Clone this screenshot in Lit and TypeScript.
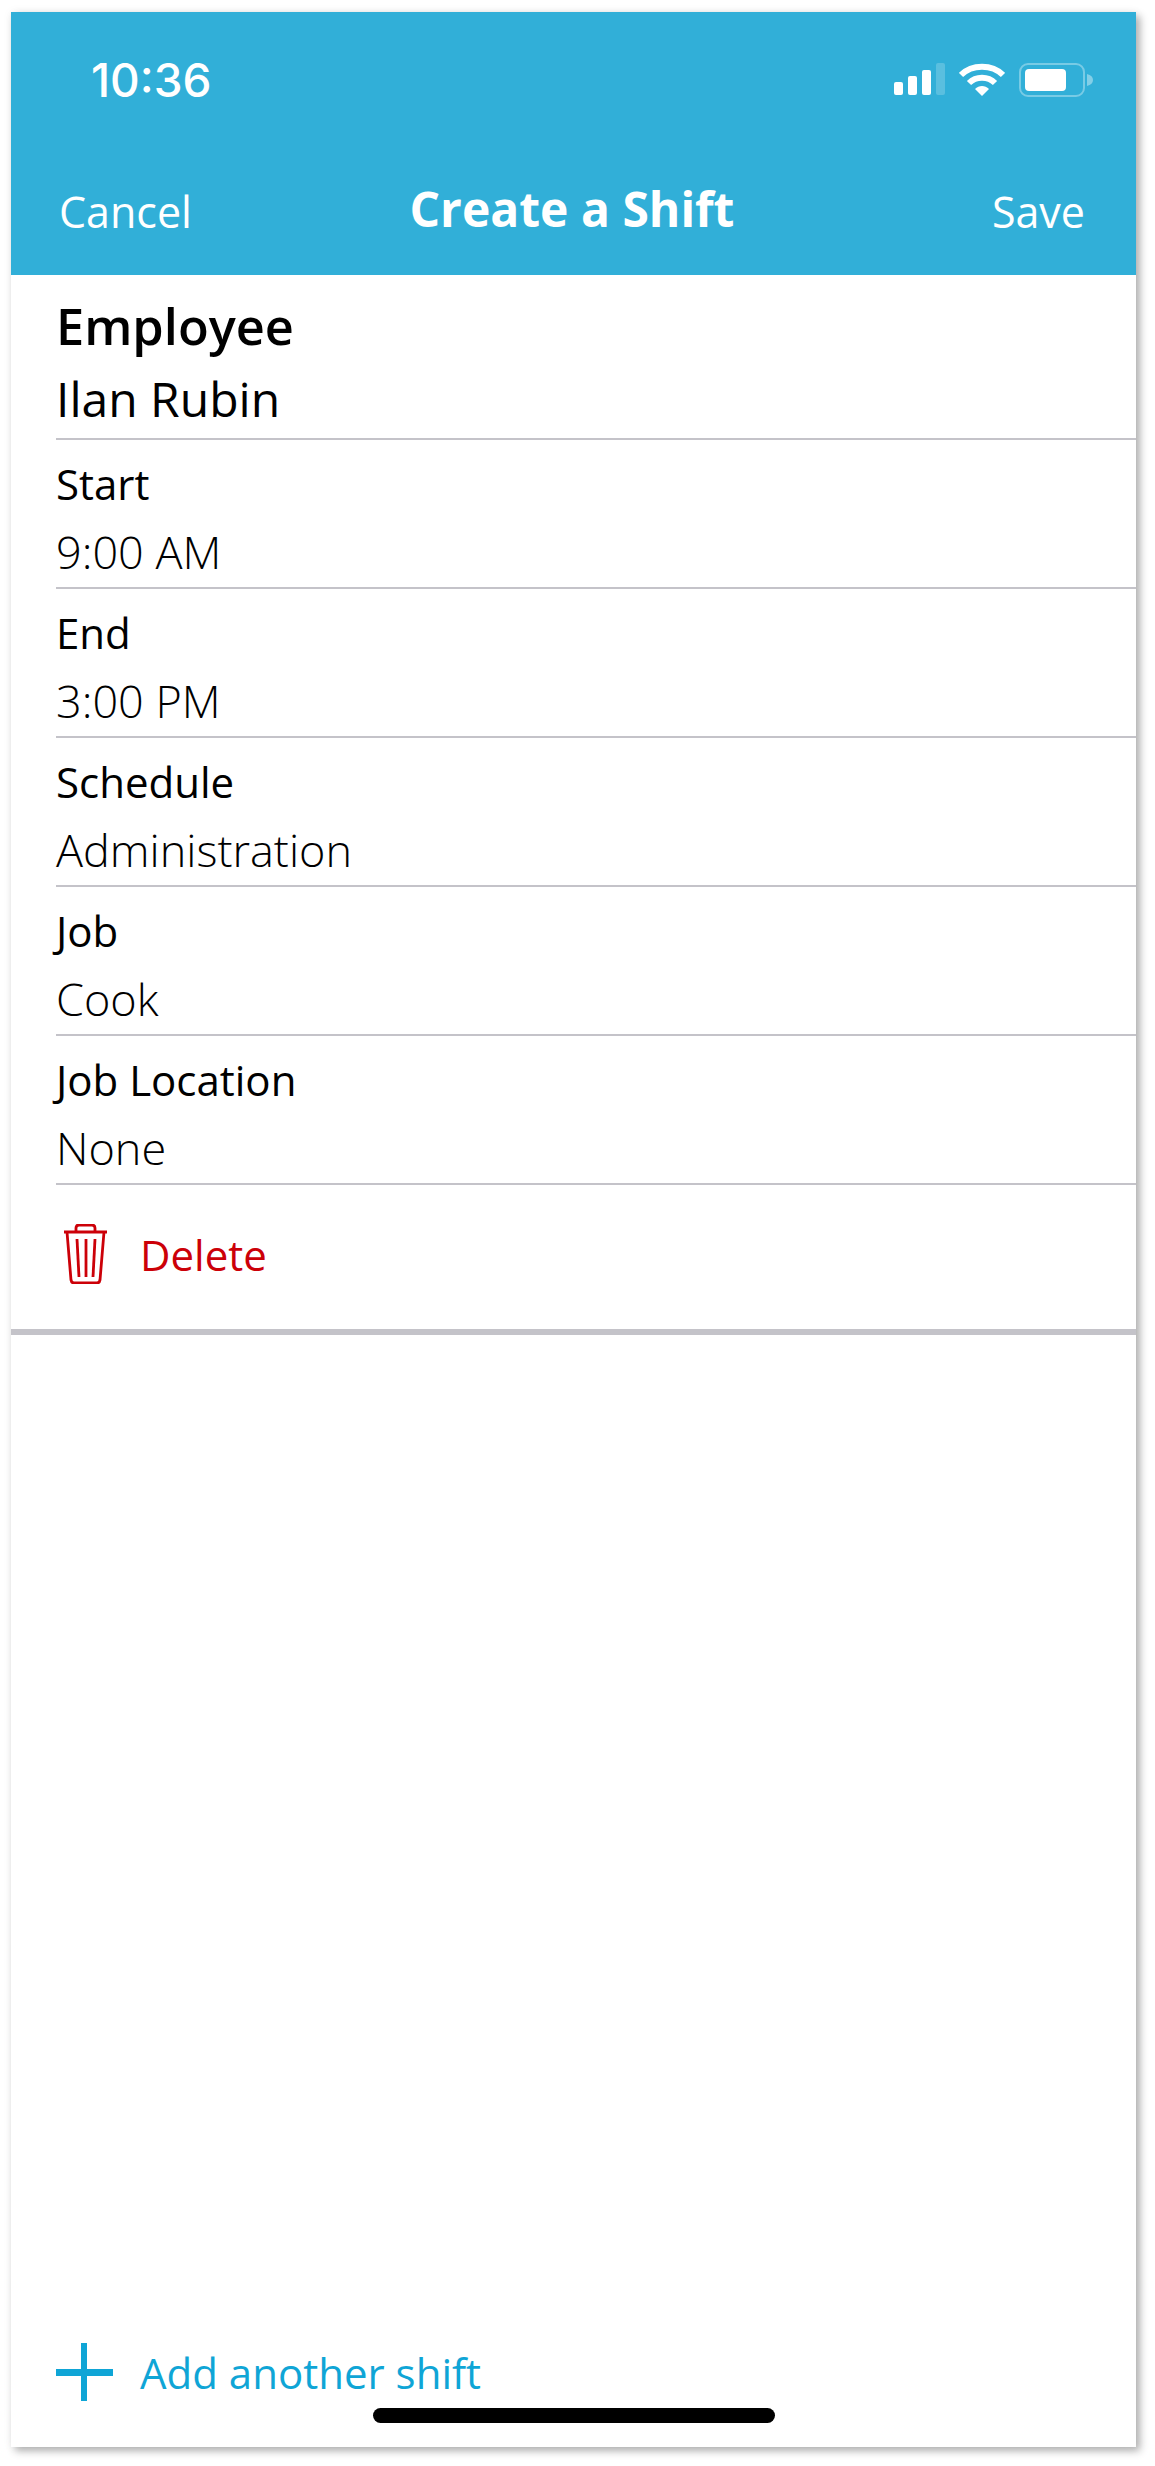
import { LitElement, html, css } from 'lit';
import { customElement } from 'lit/decorators.js';

const fields = [
   { label: 'Start', value: '9:00 AM' },
   { label: 'End', value: '3:00 PM' },
   { label: 'Schedule', value: 'Administration' },
   { label: 'Job', value: 'Cook' },
   { label: 'Job Location', value: 'None' },
];

@customElement('app-root')
export class AppRoot extends LitElement {
   static styles = css`
   :host {
      display: block;
      padding: 12px 19px 19px 11px;
      background-color: #fff;
      font-family: 'Open Sans', sans-serif;
      color: #000;
   }
   .phone {
      position: relative;
      height: 2435px;
      display: flex;
      flex-direction: column;
      background-color: #fff;
      box-shadow: 4px 4px 8px rgba(0, 0, 0, 0.3), 0 0 10px rgba(0, 0, 0, 0.05);
   }
   .header {
      height: 263px;
      flex: none;
      background-color: #31afd8;
      color: #fff;
      display: flex;
      flex-direction: column;
   }
   .status {
      display: flex;
      align-items: flex-start;
      justify-content: space-between;
      padding: 51px 42px 0 80px;
      height: 34px;
   }
   .time {
      font-family: Inter, sans-serif;
      font-size: 46px;
      font-weight: 500;
      line-height: 34px;
   }
   .status-icons {
      display: flex;
      gap: 14px;
      align-items: flex-start;
   }
   .status-icons svg {
      display: block;
   }
   .nav {
      display: grid;
      grid-template-columns: 1fr auto 1fr;
      align-items: baseline;
      padding: 78px 51px 0 48px;
   }
   .nav-btn {
      font-size: 43px;
      line-height: 70px;
   }
   .nav-btn.right {
      text-align: right;
   }
   .title {
      font-size: 48px;
      font-weight: 700;
      line-height: 70px;
      position: relative;
      top: -1px;
   }
   .employee {
      margin-left: 45px;
      padding: 14px 0 2px;
      border-bottom: 2px solid #c4c3c9;
   }
   .employee .heading {
      font-size: 50.5px;
      font-weight: 600;
      line-height: 73px;
   }
   .employee .name {
      font-size: 48px;
      line-height: 74px;
   }
   .row {
      margin-left: 45px;
      padding: 10px 0 2px;
      border-bottom: 2px solid #c4c3c9;
   }
   .row .label {
      font-size: 42px;
      line-height: 68px;
   }
   .row .value {
      font-size: 45px;
      font-weight: 300;
      line-height: 67px;
   }
   .delete {
      display: flex;
      align-items: center;
      gap: 33px;
      height: 144px;
      padding-left: 53px;
      border-bottom: 6px solid #c4c3c9;
      color: #cc0008;
      font-size: 42px;
   }
   .delete svg {
      display: block;
      margin-top: -6px;
   }
   .delete span {
      position: relative;
      top: -3px;
   }
   .add {
      margin-top: auto;
      display: flex;
      align-items: center;
      gap: 27px;
      padding: 0 0 46px 45px;
      color: #0fa5d6;
      font-size: 42px;
   }
   .add svg {
      display: block;
   }
   .home-bar {
      position: absolute;
      left: 362px;
      bottom: 24px;
      width: 402px;
      height: 15px;
      border-radius: 8px;
      background-color: #000;
   }
`;

   renderStatusIcons() {
      return html`
         <div class="status-icons">
            <svg width="51" height="33" viewBox="0 0 51 33" fill="#fff">
               <rect x="0" y="19" width="9" height="13" rx="2"></rect>
               <rect x="14" y="13" width="9" height="19" rx="2"></rect>
               <rect x="28" y="7" width="9" height="25" rx="2"></rect>
               <rect x="42" y="0" width="9" height="32" rx="2" opacity="0.2"></rect>
            </svg>
            <svg width="46" height="33" viewBox="0 0 46 33" fill="none" stroke="#fff">
               <path d="M2 12 C13 1 33 1 44 12" stroke-width="6"></path>
               <path d="M10 20 C17 13 29 13 36 20" stroke-width="6"></path>
               <path d="M16 26 L23 33 L30 26 C26 22 20 22 16 26 Z" fill="#fff" stroke="none"></path>
            </svg>
            <svg width="75" height="34" viewBox="0 0 75 34" fill="none">
               <rect x="1" y="1" width="64" height="32" rx="8" stroke="#fff" stroke-opacity="0.35" stroke-width="2"></rect>
               <rect x="6" y="6" width="41" height="22" rx="4" fill="#fff"></rect>
               <path d="M68 11 C72 12 74 14 74 17 C74 20 72 22 68 23 Z" fill="#fff" fill-opacity="0.4"></path>
            </svg>
         </div>
      `;
   }

   render() {
      return html`
         <div class="phone">
            <div class="header">
               <div class="status">
                  <div class="time">10:36</div>
                  ${this.renderStatusIcons()}
               </div>
               <div class="nav">
                  <div class="nav-btn">Cancel</div>
                  <div class="title">Create a Shift</div>
                  <div class="nav-btn right">Save</div>
               </div>
            </div>
            <div class="employee">
               <div class="heading">Employee</div>
               <div class="name">Ilan Rubin</div>
            </div>
            ${fields.map((f) => html`
               <div class="row">
                  <div class="label">${f.label}</div>
                  <div class="value">${f.value}</div>
               </div>
            `)}
            <div class="delete">
               <svg width="43" height="60" viewBox="0 0 43 60" fill="none" stroke="#cc0008" stroke-width="2.8">
                  <path d="M0 8 H43"></path>
                  <path d="M12 8 V4 Q12 1 15 1 H28 Q31 1 31 4 V8"></path>
                  <path d="M3 8 L7 56 Q7.5 59 10 59 H33 Q35.5 59 36 56 L40 8"></path>
                  <path d="M13 15 L15 53"></path>
                  <path d="M22 15 V53"></path>
                  <path d="M31 15 L29 53"></path>
               </svg>
               <span>Delete</span>
            </div>
            <div class="add">
               <svg width="57" height="58" viewBox="0 0 57 58" fill="#0fa5d6">
                  <rect x="25" y="0" width="6" height="58"></rect>
                  <rect x="0" y="26" width="57" height="7"></rect>
               </svg>
               <span>Add another shift</span>
            </div>
            <div class="home-bar"></div>
         </div>
      `;
   }
}
